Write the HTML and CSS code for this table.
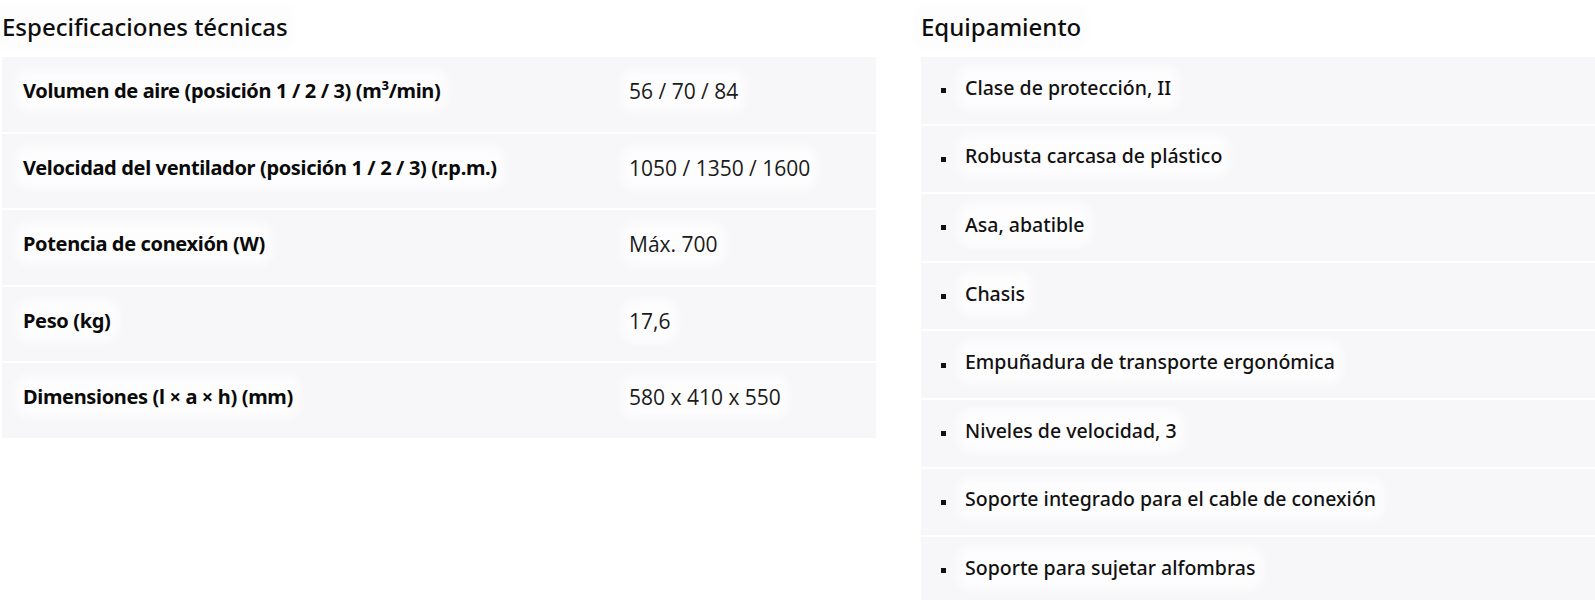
FILE: index.html
```html
<!DOCTYPE html>
<html lang="es">
<head>
<meta charset="utf-8">
<title>Especificaciones técnicas</title>
<link rel="stylesheet" href="styles.css">
</head>
<body>
<div class="page">
  <section class="specs">
    <h2 class="title"><span class="hl">Especificaciones técnicas</span></h2>
    <div class="table">
      <div class="row">
        <div class="label"><span class="hl">Volumen de aire (posición 1 / 2 / 3) (m³/min)</span></div>
        <div class="value"><span class="hl">56 / 70 / 84</span></div>
      </div>
      <div class="row">
        <div class="label"><span class="hl">Velocidad del ventilador (posición 1 / 2 / 3) (r.p.m.)</span></div>
        <div class="value"><span class="hl">1050 / 1350 / 1600</span></div>
      </div>
      <div class="row">
        <div class="label"><span class="hl">Potencia de conexión (W)</span></div>
        <div class="value"><span class="hl">Máx. 700</span></div>
      </div>
      <div class="row">
        <div class="label"><span class="hl">Peso (kg)</span></div>
        <div class="value"><span class="hl">17,6</span></div>
      </div>
      <div class="row">
        <div class="label"><span class="hl">Dimensiones (l × a × h) (mm)</span></div>
        <div class="value"><span class="hl">580 x 410 x 550</span></div>
      </div>
    </div>
  </section>
  <section class="equip">
    <h2 class="title"><span class="hl">Equipamiento</span></h2>
    <ul class="list">
      <li class="item"><span class="bullet"></span><span class="hl">Clase de protección, II</span></li>
      <li class="item"><span class="bullet"></span><span class="hl">Robusta carcasa de plástico</span></li>
      <li class="item"><span class="bullet"></span><span class="hl">Asa, abatible</span></li>
      <li class="item"><span class="bullet"></span><span class="hl">Chasis</span></li>
      <li class="item"><span class="bullet"></span><span class="hl">Empuñadura de transporte ergonómica</span></li>
      <li class="item"><span class="bullet"></span><span class="hl">Niveles de velocidad, 3</span></li>
      <li class="item"><span class="bullet"></span><span class="hl">Soporte integrado para el cable de conexión</span></li>
      <li class="item"><span class="bullet"></span><span class="hl">Soporte para sujetar alfombras</span></li>
    </ul>
  </section>
</div>
</body>
</html>
```
FILE: styles.css
```css
html, body {
  margin: 0;
  padding: 0;
  background: #ffffff;
}
body {
  font-family: "Noto Sans", "DejaVu Sans", sans-serif;
  color: #111;
  overflow: hidden;
}
.page {
  display: flex;
  gap: 45px;
  padding-left: 2px;
  width: 1593px;
}
.specs {
  width: 874px;
  flex: none;
}
.equip {
  flex: 1;
}
.title {
  margin: 12px 0 15px 0;
  height: 30px;
  font-size: 24px;
  line-height: 30px;
  font-weight: 500;
  color: #0d0d0d;
}
.hl {
  background: #fdfdfe;
  box-shadow: 0 0 9px 7px #fdfdfe;
  border-radius: 6px;
}
.table {
  display: flex;
  flex-direction: column;
  gap: 2px;
}
.row {
  display: flex;
  align-items: center;
  height: 74.5px;
  box-sizing: border-box;
  padding-bottom: 6px;
  background: #f7f6f9;
}
.label {
  width: 627px;
  padding-left: 21px;
  box-sizing: border-box;
  font-size: 20px;
  font-weight: 700;
  letter-spacing: -0.35px;
  line-height: 28px;
  color: #0a0a0a;
}
.value {
  font-family: "Open Sans", "Noto Sans", sans-serif;
  font-size: 21px;
  line-height: 28px;
  color: #1a1a1a;
}
.list {
  list-style: none;
  margin: 0;
  padding: 0;
  display: flex;
  flex-direction: column;
  gap: 2px;
}
.item {
  display: flex;
  align-items: center;
  height: 66.6px;
  box-sizing: border-box;
  padding: 0 0 5px 20px;
  background: #f7f6f9;
  font-size: 19.5px;
  font-weight: 500;
  line-height: 28px;
}
.bullet {
  width: 5px;
  height: 5px;
  background: #111;
  margin: 6px 19px 0 0;
  flex: none;
}
```
